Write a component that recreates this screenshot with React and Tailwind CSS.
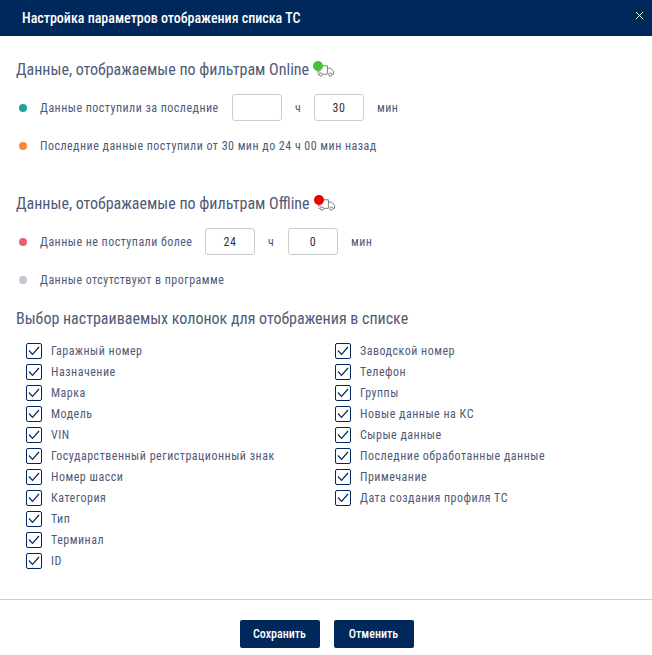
import React from 'react';

const leftColumns = [
  'Гаражный номер',
  'Назначение',
  'Марка',
  'Модель',
  'VIN',
  'Государственный регистрационный знак',
  'Номер шасси',
  'Категория',
  'Тип',
  'Терминал',
  'ID',
];

const rightColumns = [
  'Заводской номер',
  'Телефон',
  'Группы',
  'Новые данные на КС',
  'Сырые данные',
  'Последние обработанные данные',
  'Примечание',
  'Дата создания профиля ТС',
];

function Truck({ dot }) {
  return (
    <span className="relative ml-[4px] block h-5 w-5">
      <svg className="absolute left-[3px] top-[4px]" width="19" height="14" viewBox="0 0 20 14" fill="none" stroke="#777" strokeWidth="1">
        <path d="M3 1.5h9v8.5M12 4h3.5l3 3.5v3h-1.5M12 10.5H7.5M3 10.5H1.5M0 6h5M1 8h3" />
        <circle cx="5.2" cy="10.8" r="1.7" />
        <circle cx="15" cy="10.8" r="1.7" />
      </svg>
      <span className="absolute left-0 top-[1px]">
        <span className={`block h-[10px] w-[10px] rounded-full ${dot}`} />
      </span>
    </span>
  );
}

function Dot({ color }) {
  return <span className={`mx-[3px] h-2 w-2 shrink-0 rounded-full ${color}`} />;
}

function TimeInput({ value }) {
  return (
    <div className="flex h-[27px] w-[50px] items-center justify-center rounded-[3px] border border-[#ccc] text-xs text-[#333]">
      {value}
    </div>
  );
}

function CheckRow({ label }) {
  return (
    <div className="flex h-[21px] items-center">
      <span className="flex h-4 w-4 items-center justify-center rounded-[2px] border border-[#00285a]">
        <svg width="12" height="10" viewBox="0 0 12 10" fill="none" stroke="#00285a" strokeWidth="1.2">
          <path d="M1 4.5l3.5 3.8L11 1" />
        </svg>
      </span>
      <span className="ml-[9px] text-xs tracking-[0.5px] text-[#505a78] font-stretch-condensed">{label}</span>
    </div>
  );
}

export default function App() {
  return (
    <div className="flex h-[655px] w-[652px] flex-col bg-white font-['Roboto',sans-serif]">
      <header className="flex h-9 shrink-0 items-center justify-between bg-[#00285a] pl-[22px] pr-[8px]">
        <h1 className="text-sm font-medium text-white font-stretch-condensed">Настройка параметров отображения списка ТС</h1>
        <svg className="mb-[6px]" width="9" height="9" viewBox="0 0 9 9" stroke="#fff" strokeWidth="1">
          <path d="M1 1l7 7M8 1L1 8" />
        </svg>
      </header>

      <main className="flex flex-1 flex-col pl-4">
        <div className="mt-[24px] flex h-5 items-center">
          <h2 className="text-base text-[#505a78] font-stretch-condensed">Данные, отображаемые по фильтрам Online</h2>
          <Truck dot="bg-[#44c23a]" />
        </div>
        <div className="mt-[14px] flex h-[27px] items-center text-xs tracking-[0.47px] text-[#505a78] font-stretch-condensed">
          <Dot color="bg-[#1fa39a]" />
          <span className="ml-[10px] w-[192px]">Данные поступили за последние</span>
          <TimeInput value="" />
          <span className="w-[32px] pl-[13px]">ч</span>
          <TimeInput value="30" />
          <span className="ml-[13px]">мин</span>
        </div>
        <div className="mt-[11px] flex h-[27px] items-center text-xs tracking-[0.47px] text-[#505a78] font-stretch-condensed">
          <Dot color="bg-[#f58634]" />
          <span className="ml-[10px]">Последние данные поступили от 30 мин до 24 ч 00 мин назад</span>
        </div>

        <div className="mt-[35px] flex h-5 items-center">
          <h2 className="text-base text-[#505a78] font-stretch-condensed">Данные, отображаемые по фильтрам Offline</h2>
          <Truck dot="bg-[#f00000]" />
        </div>
        <div className="mt-[14px] flex h-[27px] items-center text-xs tracking-[0.47px] text-[#505a78] font-stretch-condensed">
          <Dot color="bg-[#ec5f6b]" />
          <span className="ml-[10px] w-[165px]">Данные не поступали более</span>
          <TimeInput value="24" />
          <span className="w-[33px] pl-[13px]">ч</span>
          <TimeInput value="0" />
          <span className="ml-[13px]">мин</span>
        </div>
        <div className="mt-[11px] flex h-[27px] items-center text-xs tracking-[0.47px] text-[#505a78] font-stretch-condensed">
          <Dot color="bg-[#c0c8d2]" />
          <span className="ml-[10px]">Данные отсутствуют в программе</span>
        </div>

        <h2 className="mt-[16px] h-5 text-base leading-5 text-[#505a78] font-stretch-condensed">
          Выбор настраиваемых колонок для отображения в списке
        </h2>

        <div className="mt-[11px] flex pl-[10px]">
          <div className="w-[309px]">
            {leftColumns.map((label) => (
              <CheckRow key={label} label={label} />
            ))}
          </div>
          <div>
            {rightColumns.map((label) => (
              <CheckRow key={label} label={label} />
            ))}
          </div>
        </div>
      </main>

      <footer className="flex h-[56px] shrink-0 items-start justify-center gap-[14px] border-t border-[#ccc] pl-px pt-[20px]">
        <button className="h-[28px] w-20 rounded-[2px] bg-[#00285a] text-xs font-medium text-white font-stretch-condensed">Сохранить</button>
        <button className="h-[28px] w-20 rounded-[2px] bg-[#00285a] text-xs font-medium text-white font-stretch-condensed">Отменить</button>
      </footer>
    </div>
  );
}
